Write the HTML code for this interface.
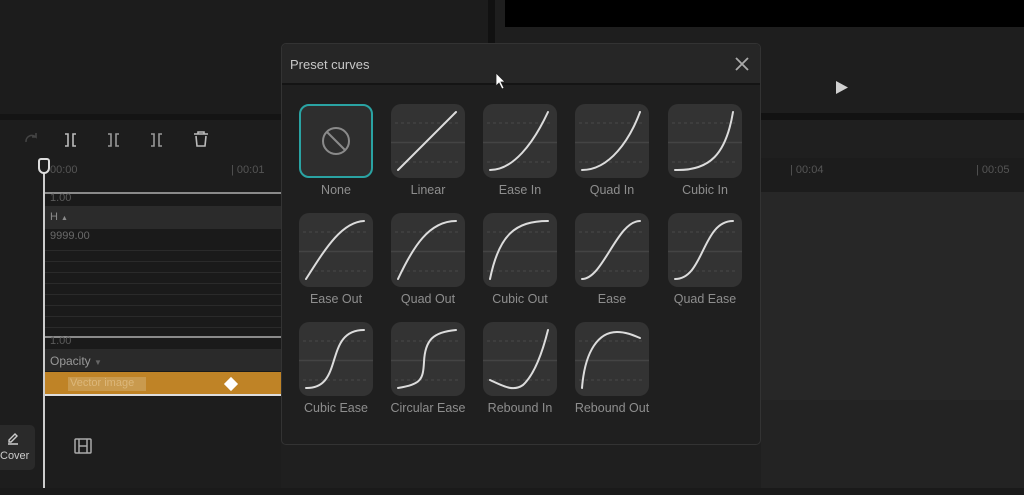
<!DOCTYPE html>
<html><head><meta charset="utf-8"><style>
*{margin:0;padding:0;box-sizing:border-box}
body{width:1024px;height:495px;overflow:hidden;background:#1f1f1f;font-family:"Liberation Sans",sans-serif;position:relative}
.a{position:absolute}
.t{color:#8a8a8a;font-size:12px;white-space:nowrap}
.tile{position:absolute;width:74px;height:74px;border-radius:10px;background:#333}
.lbl{position:absolute;width:100px;text-align:center;color:#8e8e8e;font-size:12.5px}
</style></head><body>
<div class="a" style="left:0;top:0;width:488px;height:114px;background:#1c1c1c"></div>
<div class="a" style="left:488px;top:0;width:7px;height:45px;background:#111"></div>
<div class="a" style="left:0;top:114px;width:281px;height:6px;background:#141414"></div>
<div class="a" style="left:495px;top:0;width:529px;height:114px;background:#1e1e1e"></div>
<div class="a" style="left:505px;top:0;width:519px;height:27px;background:#000"></div>
<div class="a" style="left:761px;top:113px;width:263px;height:7px;background:#121212"></div>
<svg class="a" style="left:835px;top:80px" width="14" height="15"><path d="M1 1 L13 7.5 L1 14Z" fill="#d0d0d0"/></svg>
<div class="a" style="left:0;top:120px;width:281px;height:370px;background:#1d1d1d"></div>
<svg class="a" style="left:20px;top:128px" width="200" height="24" fill="none" stroke-width="1.6">
<path d="M6 14 a6 6 0 0 1 10-5 l0-4 m0 4 l-4 0" stroke="#444"/>
<g stroke="#bbb"><path d="M45 6h3v12h-3M56 6h-3v12h3"/></g>
<g stroke="#999"><path d="M88 6h3v12h-3M99 6h-3v12h3"/></g>
<g stroke="#999"><path d="M131 6h3v12h-3M142 6h-3v12h3"/></g>
<path d="M174 6h14M178 6v-2h6v2M176 8l1 10h8l1-10" stroke="#bbb"/>
</svg>
<div class="t a" style="left:50px;top:164px;color:#555;font-size:11px">00:00</div>
<div class="t a" style="left:231px;top:164px;color:#555;font-size:11px">| 00:01</div>
<div class="a" style="left:45px;top:193px;width:236px;height:204px;background:#1a1a1a"></div>
<div class="a" style="left:45px;top:192px;width:236px;height:2px;background:#8a8a8a"></div>
<div class="t a" style="left:50px;top:192px;font-size:11px;color:#5a5a5a">1.00</div>
<div class="a" style="left:45px;top:206px;width:236px;height:23px;background:#2b2b2b"></div>
<div class="t a" style="left:50px;top:211px;font-size:11px">H <span style="font-size:7px">▲</span></div>
<div class="t a" style="left:50px;top:230px;font-size:11px;color:#6a6a6a">9999.00</div>
<div class="a" style="left:45px;top:240px;width:236px;height:96px;background:repeating-linear-gradient(#1a1a1a 0 10px,#2a2a2a 10px 11px)"></div>
<div class="a" style="left:45px;top:336px;width:236px;height:2px;background:#8a8a8a"></div>
<div class="t a" style="left:50px;top:335px;font-size:11px;color:#5a5a5a">1.00</div>
<div class="a" style="left:45px;top:349px;width:236px;height:22px;background:#2a2a2a"></div>
<div class="t a" style="left:50px;top:354px;color:#999">Opacity <span style="font-size:8px;color:#666">▼</span></div>
<div class="a" style="left:45px;top:372px;width:236px;height:24px;background:#bf8326;border-bottom:2px solid #ddd"></div>
<div class="a" style="left:68px;top:377px;width:78px;height:14px;background:#c99a4e"></div>
<div class="t a" style="left:70px;top:377px;font-size:11px;color:#dcb77a">Vector image</div>
<div class="a" style="left:226px;top:379px;width:10px;height:10px;background:#fff;transform:rotate(45deg)"></div>
<div class="a" style="left:43px;top:160px;width:2px;height:335px;background:#ccc"></div>
<div class="a" style="left:38px;top:158px;width:12px;height:16px;border:2px solid #ddd;border-radius:3px 3px 6px 6px;background:#1d1d1d"></div>
<div class="a" style="left:0;top:425px;width:35px;height:45px;background:#2a2a2a;border-radius:0 5px 5px 0"></div>
<svg class="a" style="left:6px;top:431px" width="14" height="14" fill="none" stroke="#ccc" stroke-width="1.4"><path d="M3 9l6-6 2 2-6 6H3z M2 13h10"/></svg>
<div class="t a" style="left:0;top:450px;color:#ccc;font-size:11px">Cover</div>
<svg class="a" style="left:74px;top:438px" width="18" height="16" fill="none" stroke="#aaa" stroke-width="1.5"><rect x="1" y="1" width="16" height="14" rx="1"/><path d="M5 1v14M13 1v14M5 8h8"/></svg>
<div class="a" style="left:761px;top:158px;width:263px;height:34px;background:#1c1c1c"></div>
<div class="t a" style="left:790px;top:164px;color:#555;font-size:11px">| 00:04</div>
<div class="t a" style="left:976px;top:164px;color:#555;font-size:11px">| 00:05</div>
<div class="a" style="left:761px;top:192px;width:263px;height:208px;background:#272727"></div>
<div class="a" style="left:761px;top:400px;width:263px;height:88px;background:#232323"></div>
<div class="a" style="left:0;top:488px;width:1024px;height:7px;background:#1a1a1a"></div>
<div class="a" style="left:281px;top:43px;width:480px;height:402px;background:#1f1f1f;border:1px solid #333;border-radius:5px;overflow:hidden">
 <div class="a" style="left:0;top:0;width:480px;height:41px;background:#262626;border-bottom:2px solid #141414"></div>
 <div class="a" style="left:8px;top:13px;color:#c8c8c8;font-size:13px">Preset curves</div>
 <svg class="a" style="left:453px;top:13px" width="14" height="14" stroke="#aaa" stroke-width="1.8"><path d="M1 1L13 13M13 1L1 13"/></svg>
</div>
<svg class="a" style="left:495px;top:72px" width="12" height="18"><path d="M1 1 L1 14 L4 11 L7 17 L9 16 L6 10 L10 10Z" fill="#fff" stroke="#222" stroke-width="0.8"/></svg>
<div id="g"></div>
<script>
const cols=[299,391,483,575,668],rows=[104,213,322];
const items=[
["None",null],["Linear","M7 66 L65 8"],["Ease In","M7 66 C30 66 50 40 65 8"],["Quad In","M7 66 C35 66 55 35 65 8"],["Cubic In","M7 66 C42 67 58 50 65 8"],
["Ease Out","M7 66 C25 38 42 9 65 8"],["Quad Out","M7 66 C22 34 38 8 65 8"],["Cubic Out","M7 66 C16 22 32 8 65 8"],["Ease","M7 66 C28 66 42 8 65 8"],["Quad Ease","M7 66 C36 66 34 8 65 8"],
["Cubic Ease","M7 66 C46 67 24 8 65 8"],["Circular Ease","M7 66 C30 62 32 58 33 40 C34 18 42 10 65 8"],["Rebound In","M7 58 C20 64 30 70 40 63 C52 52 60 28 65 8"],["Rebound Out","M7 66 C10 28 24 10 42 10 C52 10 60 14 65 16"]];
let h="";
items.forEach((it,i)=>{const x=cols[i%5],y=rows[Math.floor(i/5)];
if(!it[1]){h+=`<div class="tile" style="left:${x}px;top:${y}px;border:2px solid #2aa3a3;background:#2e2e2e"></div><svg class="a" style="left:${x}px;top:${y}px" width="74" height="74" fill="none" stroke="#8a8a8a" stroke-width="2"><circle cx="37" cy="37" r="13"/><path d="M28 28L46 46"/></svg>`;}
else{h+=`<div class="tile" style="left:${x}px;top:${y}px"></div><svg class="a" style="left:${x}px;top:${y}px" width="74" height="74" fill="none"><path d="M4 19H70M4 58H70" stroke="#4a4a4a" stroke-dasharray="3 3"/><path d="M0 38.5H74" stroke="#444" stroke-width="1.5"/><path d="${it[1]}" stroke="#dcdcdc" stroke-width="2" stroke-linecap="round"/></svg>`;}
h+=`<div class="lbl" style="left:${x-13}px;top:${y+79}px">${it[0]}</div>`;});
document.getElementById("g").innerHTML=h;
</script>
</body></html>
